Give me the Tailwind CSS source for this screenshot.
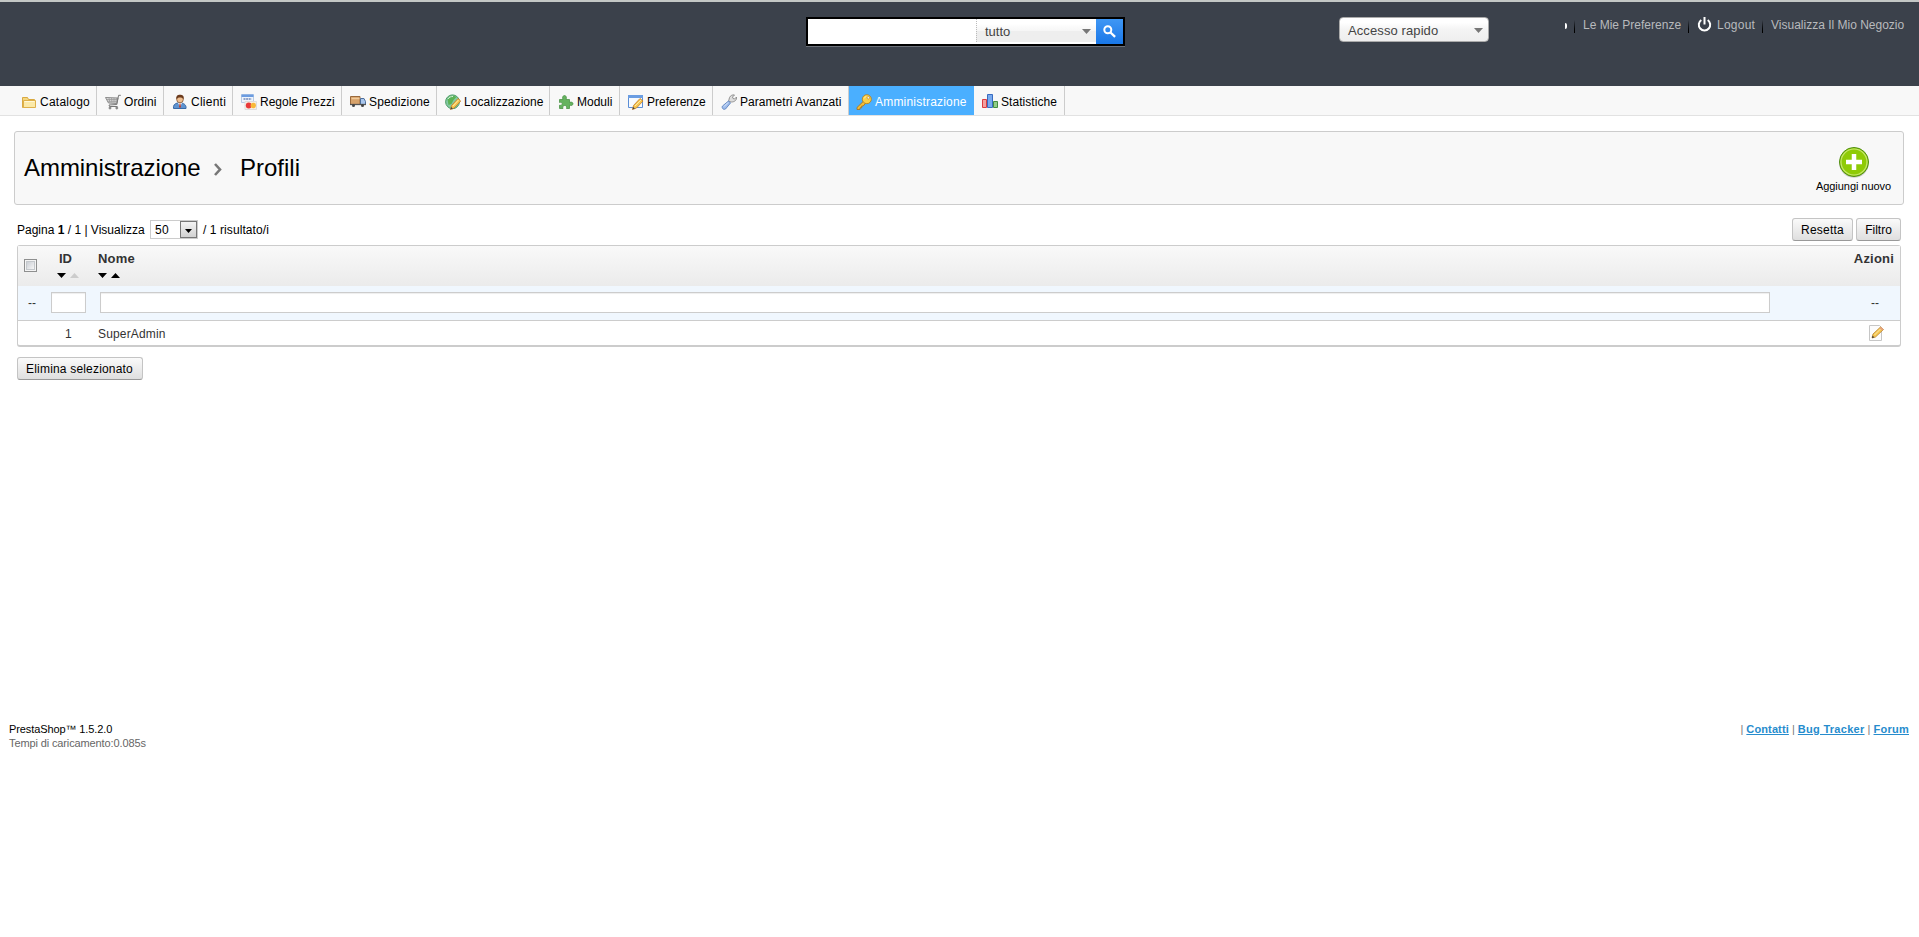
<!DOCTYPE html>
<html lang="it">
<head>
<meta charset="utf-8">
<title>Profili</title>
<script src="https://cdn.jsdelivr.net/npm/@tailwindcss/browser@4"></script>
</head>
<body class="bg-white text-black text-[12px] leading-4 font-['Liberation_Sans',Arial,sans-serif] h-[937px] overflow-hidden">
<header class="h-[86px] bg-[#3b414b] border-t-2 border-[#c3c7c5] flex items-start">
  <form class="ml-[806px] mt-[15px] w-[319px] h-[29px] border-2 border-black flex bg-white shadow-[0_1px_0_#6b7078]">
    <div class="w-[168px]"></div>
    <div class="w-[120px] h-[23px] border-l border-dotted border-[#bbb] bg-linear-to-b from-white from-20% via-[#f6f6f6] via-50% to-[#eeeeee] to-52% flex items-center justify-between pl-[8px] pr-[5px] text-[13px] text-[#444] pt-[3px]">
      <span>tutto</span>
      <svg class="-mt-[2px]" width="9" height="5" viewBox="0 0 9 5"><path d="M0 0h9L4.5 5z" fill="#777"/></svg>
    </div>
    <div class="w-[27px] h-[25px] bg-linear-to-b from-[#3f97f4] to-[#1877e8] flex items-center justify-center">
      <svg class="-mt-px" width="13" height="13" viewBox="0 0 13 13" fill="none" stroke="#fff"><circle cx="4.8" cy="4.8" r="3.5" stroke-width="2"/><path d="M7.5 7.5l4.6 4.4" stroke-width="2.3"/></svg>
    </div>
  </form>
  <div class="ml-[214px] mt-[15px] w-[150px] h-[25px] rounded-[4px] border border-[#aaa] bg-linear-to-b from-white from-20% via-[#f4f4f4] via-50% to-[#eeeeee] flex items-center justify-between pl-[8px] pr-[5px] text-[13px] text-[#444]">
    <span class="tracking-[0.1px] pt-[2px]">Accesso rapido</span>
    <svg class="mt-px" width="9" height="5" viewBox="0 0 9 5"><path d="M0 0h9L4.5 5z" fill="#777"/></svg>
  </div>
  <div class="ml-[76px] mt-[14px] h-[18px] flex items-center text-[#b8babd] whitespace-nowrap">
    <i class="w-[2px] h-[6px] bg-white rounded-r mt-px"></i>
    <i class="w-px h-[13px] bg-linear-to-b from-[#3b414b] to-black ml-[7px] mt-[3px]"></i>
    <span class="ml-[8px] w-[105px]">Le Mie Preferenze</span>
    <i class="w-px h-[13px] bg-linear-to-b from-[#3b414b] to-black mt-[3px]"></i>
    <svg class="ml-[8px] -mt-[2px]" width="15" height="15" viewBox="0 0 15 15" fill="none" stroke="#fff" stroke-width="2"><path d="M4.300 3a5.700 5.700 0 1 0 6.400 0M7.500 0v7.500"/></svg>
    <span class="ml-[5px] w-[45px] tracking-[0.25px]">Logout</span>
    <i class="w-px h-[13px] bg-linear-to-b from-[#3b414b] to-black mt-[3px]"></i>
    <span class="ml-[8px]">Visualizza Il Mio Negozio</span>
  </div>
</header>

<nav class="h-[30px] bg-[#f8f8f8] border-b border-[#e2e2e2] flex pl-[15px] gap-[2px] whitespace-nowrap">
  <a class="w-[82px] border-r border-[#ccc] flex items-center pt-[2px] pl-[6px] gap-[3px]">
    <svg width="16" height="16" viewBox="0 0 16 16"><path d="M1.5 13.5v-10h5l1 2h6v8z" fill="#f5d77f" stroke="#d9a941"/><path d="M2.5 6.5h12v7h-12z" fill="#fbe9a8" stroke="#deb04b"/><path d="M3.5 7.5h10" stroke="#fff8d8"/></svg>
    <span class="tracking-[0.25px]">Catalogo</span></a>
  <a class="w-[65px] border-r border-[#ccc] flex items-center pt-[2px] pl-[6px] gap-[3px]">
    <svg width="16" height="16" viewBox="0 0 16 16" fill="none" stroke="#8a8a8a"><path d="M.5 3.500l12.500 .5-1.300 5.500-8.200-.5z" fill="#dcdcdc"/><path d="M1.500 5.500h11M2.500 7.300h9.500M4 4l1 5M6.500 4l.5 5M9 4v5M11.500 4l-.5 5" stroke="#9a9a9a" stroke-width=".8"/><path d="M15.800 1.300h-2.200l-1.800 9.200-7.800.5 .5 1.500h8" stroke="#777"/><circle cx="5" cy="14" r="1" fill="#777"/><circle cx="11.800" cy="14" r="1" fill="#777"/></svg>
    <span class="tracking-[0.1px]">Ordini</span></a>
  <a class="w-[67px] border-r border-[#ccc] flex items-center pt-[2px] pl-[6px] gap-[3px]">
    <svg width="16" height="16" viewBox="0 0 16 16"><path d="M1.500 14.500c-.5-3 1-5 4-5.500h4c3 .5 5 2.500 4.500 5.500z" fill="#5f93cf" stroke="#386aa8"/><path d="M6 9l2 3.500L10 9z" fill="#fff"/><path d="M7.500 9.500h1l.5 4h-2z" fill="#b93d2c"/><circle cx="8" cy="5.500" r="3.300" fill="#efbf91" stroke="#7a4a26" stroke-width=".7"/><path d="M4.300 5.500C3.800 2 5.500 .8 8 .8s4.300 1 3.700 4.700c-1-2-2.500-1.800-4-2-1.300 0-2.700.5-3.400 2z" fill="#6b3a1c"/></svg>
    <span class="tracking-[0.25px]">Clienti</span></a>
  <a class="w-[107px] border-r border-[#ccc] flex items-center pt-[2px] pl-[6px] gap-[3px]">
    <svg width="16" height="16" viewBox="0 0 16 16"><path d="M.5.5h12v8H.5z" fill="#eef4fc" stroke="#b7cbe5"/><path d="M.5.500h12v2.500H.5z" fill="#6c9ce0"/><path d="M2.500 5h8" stroke="#7288b8" stroke-width="1.500" stroke-dasharray="2 .6"/><path d="M4 7.500h11.500v8H4z" fill="#f9eee2" stroke="#ddd"/><circle cx="7.700" cy="11.500" r="2.900" fill="#e8393a"/><circle cx="12.300" cy="11.500" r="2.700" fill="#f8b93a"/></svg>
    <span>Regole Prezzi</span></a>
  <a class="w-[93px] border-r border-[#ccc] flex items-center pt-[2px] pl-[6px] gap-[3px]">
    <svg width="16" height="16" viewBox="0 0 16 16"><path d="M.5 2.500h9.500v8H.5z" fill="#d7a26a" stroke="#9a6a3c"/><path d="M1.500 4.500h8" stroke="#f1cb9b" stroke-width="1.500"/><path d="M10.500 4.500h3.500l1.500 3v3h-5z" fill="#a9c6ed" stroke="#4d6f9d"/><path d="M0 10.500h16" stroke="#555" stroke-width="1.300"/><circle cx="3.500" cy="11.500" r="1.500" fill="#444"/><circle cx="12.500" cy="11.500" r="1.500" fill="#444"/></svg>
    <span class="tracking-[0.15px]">Spedizione</span></a>
  <a class="w-[111px] border-r border-[#ccc] flex items-center pt-[2px] pl-[6px] gap-[3px]">
    <svg width="16" height="16" viewBox="0 0 16 16"><circle cx="7.500" cy="7.800" r="6.900" fill="#84c9a4" stroke="#4b9c64"/><path d="M2.500 5c2-4 6-4 9-2l-3 3-2 4-3 1z" fill="#5cb354"/><path d="M3 5c1-2 3-2.500 5-2.500" stroke="#d6f1df" fill="none"/><path d="M5.500 15.500l1-4 6.500-7 2.700 2.500-6.500 7z" fill="#f6c650" stroke="#c17a28" stroke-width=".8"/><path d="M8 12l5.500-6" stroke="#fdeaa5"/><path d="M5.500 15.500l.7-2.500 1.700 1.500z" fill="#444"/></svg>
    <span class="tracking-[0.06px]">Localizzazione</span></a>
  <a class="w-[68px] border-r border-[#ccc] flex items-center pt-[2px] pl-[6px] gap-[3px]">
    <svg width="16" height="16" viewBox="0 0 16 16"><path d="M1.500 5.500h3.500c-1-2 0-4 1.500-4s2.500 2 1.500 4h3.500v3c2-1 3.500 0 3.500 1.300s-1.500 2.200-3.500 1.300v3.400H8.500c.7-2-.3-3-1.800-3s-2.400 1-1.700 3H1.500v-3.300c1.700.5 2.700-.4 2.700-1.500S3.200 8 1.500 8.500z" fill="#66b360" stroke="#4c9448" stroke-width=".8"/></svg>
    <span>Moduli</span></a>
  <a class="w-[91px] border-r border-[#ccc] flex items-center pt-[2px] pl-[6px] gap-[3px]">
    <svg width="16" height="16" viewBox="0 0 16 16"><path d="M.5 1.500h14v12H.5z" fill="#f7fafe" stroke="#5b8ed6"/><path d="M0 1h15v3H0z" fill="#6b9de2"/><path d="M4.500 15.500l1-4 6.500-7 3 2.500-6.500 7z" fill="#f6c650" stroke="#c17a28" stroke-width=".8"/><path d="M7 12l6-6" stroke="#fdeaa5"/><path d="M4.500 15.500l.7-2.500 1.700 1.500z" fill="#444"/></svg>
    <span>Preferenze</span></a>
  <a class="w-[134px] border-r border-[#ccc] flex items-center pt-[2px] pl-[6px] gap-[3px]">
    <svg width="16" height="16" viewBox="0 0 16 16"><path d="M7.500 7.500l1-4c1-2 3-3 5-2.500L11.500 3l.5 1.500 1.500.5L15.500 3c.5 3-2 5-5 5z" fill="#ddd" stroke="#888" stroke-width=".9"/><path d="M7.500 7l2 2-5 6c-2 1.200-4.200-1-3-3z" fill="#9fbdec" stroke="#5d83c0" stroke-width=".9"/><path d="M3 12.500l4-4" stroke="#dce8fa"/></svg>
    <span class="tracking-[0.05px]">Parametri Avanzati</span></a>
  <a class="-ml-[2px] w-[125px] bg-[#4aafff] text-white flex items-center pt-[2px] pl-[7px] gap-[3px]">
    <svg width="16" height="16" viewBox="0 0 16 16"><path d="M8.200 6.500L1 13.500v2h3v-1.700h1.700V12h1.500l2.200-2.500z" fill="#f0bd38" stroke="#a86c14" stroke-width=".8"/><circle cx="10.800" cy="5.200" r="4.500" fill="#fbd048" stroke="#b27a18" stroke-width=".8"/><circle cx="12.300" cy="3.800" r="1.200" fill="#fff" stroke="#b27a18" stroke-width=".6"/><path d="M8 4.500c.5-1 1.200-1.700 2.200-2" stroke="#fff0a5" fill="none"/></svg>
    <span class="tracking-[0.2px]">Amministrazione</span></a>
  <a class="-ml-px w-[90px] border-r border-[#ccc] flex items-center pt-[2px] pl-[7px] gap-[3px]">
    <svg width="16" height="16" viewBox="0 0 16 16"><path d="M.5 5.500h4v8h-4z" fill="#f3a09e" stroke="#dc3b40"/><path d="M5.500 .500h5v13h-5z" fill="#78aaee" stroke="#386bc0"/><path d="M11.500 7.500h4v6h-4z" fill="#91cc88" stroke="#438d40"/></svg>
    <span class="tracking-[0.05px]">Statistiche</span></a>
</nav>

<main class="h-[599px] pt-[15px]">
  <section class="ml-[14px] mr-[15px] h-[74px] bg-[#f8f8f8] border border-[#ccc] rounded-[3px] flex justify-between">
    <h1 class="flex items-center text-[24px] leading-[28px] pl-[9px] pb-px">
      <span class="w-[190px] tracking-[-0.05px]">Amministrazione</span>
      <svg class="mt-[4px]" width="8" height="13" viewBox="0 0 8 13"><path d="M1 1l5 5.500L1 12" fill="none" stroke="#777" stroke-width="2.600"/></svg>
      <span class="ml-[18px]">Profili</span>
    </h1>
    <a class="flex flex-col items-center w-[75px] mr-[12px] pt-[14px] text-[11px] leading-[14px] whitespace-nowrap">
      <svg width="32" height="32" viewBox="0 0 32 32"><circle cx="16" cy="17" r="14.800" fill="#ccc"/><circle cx="16" cy="16" r="14.500" fill="#8fcb06" stroke="#4f8d12"/><circle cx="16" cy="16" r="13" fill="none" stroke="#c6e66d" stroke-width="1.200"/><path d="M16 8v16M8 16h16" stroke="#fff" stroke-width="4.500"/></svg>
      <span class="pt-px tracking-[-0.05px]">Aggiungi nuovo</span>
    </a>
  </section>

  <div class="ml-[17px] mr-[18px] mt-[13px] h-[23px] flex items-center">
    <span class="w-[133px] whitespace-nowrap pt-px">Pagina <b>1</b> / 1 | Visualizza</span>
    <div class="w-[48px] h-[19px] border border-[#ccc] flex items-stretch">
      <span class="w-[29px] pl-[4px] leading-[19px] tracking-[0.3px]">50</span>
      <span class="w-[17px] border border-[#777] bg-linear-to-b from-[#f4f4f4] to-[#d2d2d2] flex items-center justify-center"><svg class="mt-[3px]" width="7" height="4" viewBox="0 0 7 4"><path d="M0 0h7L3.500 4z"/></svg></span>
    </div>
    <span class="ml-[5px] pt-px tracking-[0.08px]">/ 1 risultato/i</span>
    <span class="ml-auto w-[61px] h-[23px] border border-[#c4c4c4] border-b-[#999] rounded-[3px] bg-linear-to-b from-[#fafafa] to-[#dfdfdf] flex items-center justify-center tracking-[0.2px] pt-px">Resetta</span>
    <span class="ml-[3px] w-[45px] h-[23px] border border-[#c4c4c4] border-b-[#999] rounded-[3px] bg-linear-to-b from-[#fafafa] to-[#dfdfdf] flex items-center justify-center pt-px">Filtro</span>
  </div>

  <div class="ml-[17px] mr-[18px] mt-[4px] border border-b-2 border-[#ccc] rounded-[3px] text-[#333]">
    <div class="h-[40px] bg-linear-to-b from-[#f9f9f9] to-[#ebebeb] flex font-bold text-[13px]">
      <div class="w-[39px] pl-[6px] pt-[13px]"><div class="size-[13px] border border-[#8e8f8f] bg-[#f4f4f4] p-px"><div class="size-full border border-[#c4c8cc] bg-linear-to-br from-[#cbcfd5] to-[#f6f6f6]"></div></div></div>
      <div class="w-[41px] pt-[5px]"><div class="pl-[2px]">ID</div>
        <svg class="mt-[6px]" width="22" height="5" viewBox="0 0 22 5"><path d="M0 0h9L4.500 5z" fill="#000"/><path d="M13 5h9L17.500 0z" fill="#ccc"/></svg></div>
      <div class="grow pt-[5px]"><div class="tracking-[0.2px]">Nome</div>
        <svg class="mt-[6px]" width="22" height="5" viewBox="0 0 22 5"><path d="M0 0h9L4.500 5zM13 5h9L17.500 0z" fill="#000"/></svg></div>
      <div class="pt-[5px] pr-[6px] tracking-[0.2px]">Azioni</div>
    </div>
    <div class="h-[35px] bg-[#f0f7fe] border-b border-[#ccc] flex items-center">
      <span class="w-[33px] pl-[10px]">--</span>
      <span class="w-[35px] h-[21px] border border-[#ccc] bg-white shadow-[inset_0_1px_1px_#eee] -mt-px"></span>
      <span class="ml-[14px] w-[1670px] h-[21px] border border-[#ccc] bg-white shadow-[inset_0_1px_1px_#eee] -mt-px"></span>
      <span class="ml-auto mr-[21px]">--</span>
    </div>
    <div class="h-[24px] flex items-center">
      <span class="w-[80px] pl-[47px] pt-px">1</span>
      <span class="tracking-[0.15px] pt-px">SuperAdmin</span>
      <svg class="ml-auto mr-[15px]" width="17" height="16" viewBox="0 0 17 16"><path d="M1.500.5h10l2 2v13h-12z" fill="#fcfcfc" stroke="#c6c6c6"/><path d="M4 13l1-4 7.500-7 3 2.500-8 7.500z" fill="#f6c650" stroke="#b88433" stroke-width=".8"/><path d="M6.500 10l6-6" stroke="#fdeaa5"/><path d="M11.500 3l2.500 2.500 1.500-1-2.500-2.500z" fill="#e7a17e"/><path d="M4 13l.6-2.200 1.800 1.400z" fill="#333"/></svg>
    </div>
  </div>

  <div class="ml-[17px] mt-[10px] w-[126px] h-[23px] border border-[#c4c4c4] border-b-[#999] rounded-[3px] bg-linear-to-b from-[#fafafa] to-[#dfdfdf] flex items-center justify-center pt-px pr-px tracking-[0.18px]">Elimina selezionato</div>
</main>

<footer class="flex justify-between pl-[9px] pr-[10px] pt-[7px] text-[11px] leading-[14px]">
  <div><p class="tracking-[-0.1px]">PrestaShop™ 1.5.2.0</p><p class="text-[#666] tracking-[-0.12px]">Tempi di caricamento:0.085s</p></div>
  <div class="text-[#777]">| <a class="font-bold underline text-[#268ccd] tracking-[0.12px]">Contatti</a> | <a class="font-bold underline text-[#268ccd] tracking-[0.28px]">Bug Tracker</a> | <a class="font-bold underline text-[#268ccd] tracking-[0.25px]">Forum</a></div>
</footer>
</body>
</html>
